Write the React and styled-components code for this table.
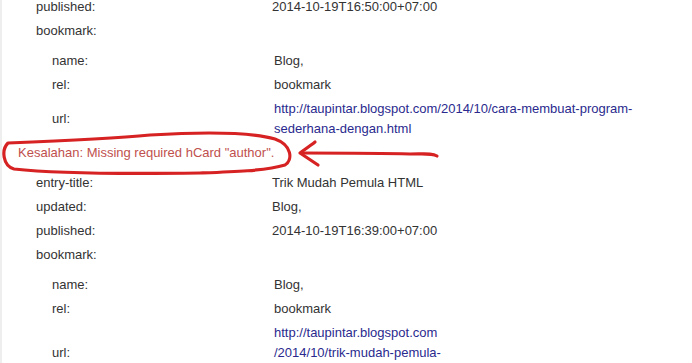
import React from "react";
import styled, { createGlobalStyle } from "styled-components";

const GlobalStyle = createGlobalStyle`
  html, body { margin: 0; padding: 0; background: #fff; }
  body {
    font-family: "Liberation Sans", Arial, sans-serif;
    font-size: 13px;
    color: #333;
  }
`;

const Root = styled.div`
  position: relative;
  width: 692px;
  height: 363px;
  overflow: hidden;
  background: #fff;
`;

const Page = styled.div`
  margin-top: -5px;
  border-left: 2px solid #eeeeee;
  min-height: 380px;
`;

const Group = styled.div`
  display: flex;
  flex-direction: column;
  padding-left: ${(p) => p.$indent}px;
  margin-top: ${(p) => p.$gap || 0}px;
`;

const Row = styled.div`
  display: grid;
  grid-template-columns: ${(p) => p.$labelWidth}px 1fr;
  align-items: center;
  padding: 2px 0;
  line-height: 20px;
`;

const Label = styled.div`
  color: #333;
`;

const Value = styled.div`
  color: #333;
`;

const Link = styled.a`
  color: #2a2a8e;
  text-decoration: none;
`;

const Line = styled.span`
  display: block;
  white-space: nowrap;
`;

const ErrorLine = styled.div`
  color: #c0504d;
  line-height: 20px;
  padding: 2px 0 2px 16px;
  margin-bottom: 6px;
`;

const Overlay = styled.svg`
  position: absolute;
  left: 0;
  top: 0;
  pointer-events: none;
`;

const TOP_LABEL = 236;
const NESTED_LABEL = 222;

function Prop({ label, width, children }) {
  return (
    <Row $labelWidth={width}>
      <Label>{label}</Label>
      <Value>{children}</Value>
    </Row>
  );
}

function Bookmark({ lines }) {
  return (
    <Group $indent={50} $gap={6}>
      <Prop label="name:" width={NESTED_LABEL}>Blog,</Prop>
      <Prop label="rel:" width={NESTED_LABEL}>bookmark</Prop>
      <Prop label="url:" width={NESTED_LABEL}>
        <Link href="#">
          {lines.map((l) => (
            <Line key={l}>{l}</Line>
          ))}
        </Link>
      </Prop>
    </Group>
  );
}

export default function App() {
  return (
    <>
      <GlobalStyle />
      <Root>
        <Page>
          <Group $indent={34}>
            <Prop label="published:" width={TOP_LABEL}>2014-10-19T16:50:00+07:00</Prop>
            <Prop label="bookmark:" width={TOP_LABEL} />
          </Group>
          <Bookmark
            lines={[
              "http://taupintar.blogspot.com/2014/10/cara-membuat-program-",
              "sederhana-dengan.html",
            ]}
          />
          <ErrorLine>Kesalahan: Missing required hCard "author".</ErrorLine>
          <Group $indent={34}>
            <Prop label="entry-title:" width={TOP_LABEL}>Trik Mudah Pemula HTML</Prop>
            <Prop label="updated:" width={TOP_LABEL}>Blog,</Prop>
            <Prop label="published:" width={TOP_LABEL}>2014-10-19T16:39:00+07:00</Prop>
            <Prop label="bookmark:" width={TOP_LABEL} />
          </Group>
          <Bookmark
            lines={[
              "http://taupintar.blogspot.com",
              "/2014/10/trik-mudah-pemula-",
              "html.html",
            ]}
          />
        </Page>
        <Overlay width="692" height="363" viewBox="0 0 692 363">
          <g fill="none" stroke="#d62222" strokeWidth="3.2" strokeLinecap="round" strokeLinejoin="round">
            <path d="M 8 143 C 60 141, 110 139, 150 135 C 200 132, 250 132, 275 139 C 292 145, 293 160, 285 165 C 265 171, 230 172, 200 173 C 130 174, 50 173, 14 169 C 3 166, 1 150, 8 143 Z" />
            <path d="M 437 156 C 432 153, 425 154, 410 154 C 380 153, 340 153, 302 153" />
            <path d="M 315 142 C 310 146, 304 150, 300 153 C 306 157, 312 161, 318 165" />
          </g>
        </Overlay>
      </Root>
    </>
  );
}
